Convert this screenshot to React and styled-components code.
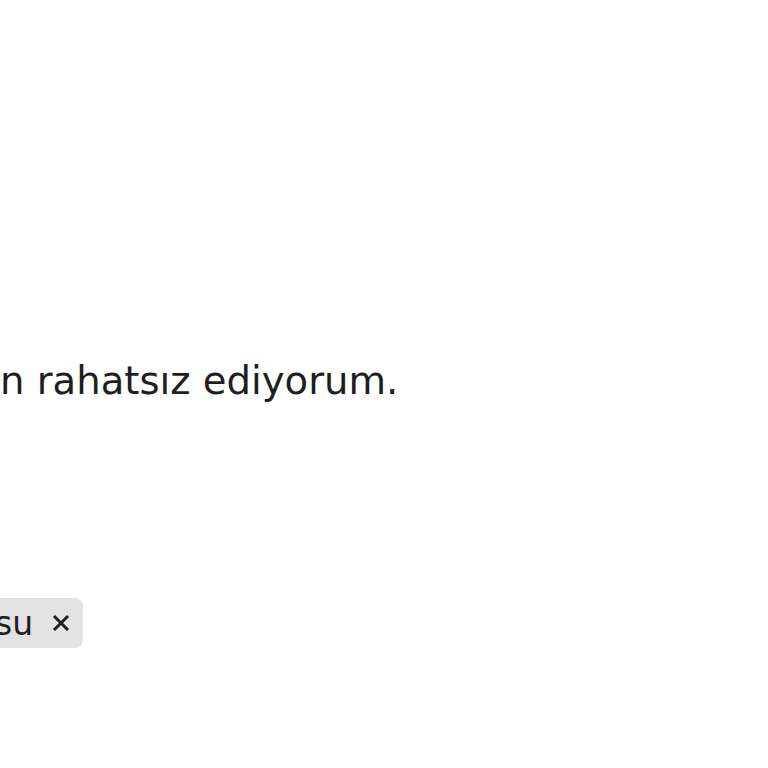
import React from "react";
import styled, { createGlobalStyle } from "styled-components";

const Global = createGlobalStyle`
  html, body { margin: 0; padding: 0; background: #ffffff; }
  body { font-family: "DejaVu Sans", Verdana, sans-serif; color: #1f1f1f; overflow: hidden; }
`;

const Page = styled.div`
  width: 768px;
  height: 768px;
  overflow: hidden;
  display: flex;
  flex-direction: column;
  align-items: flex-start;
  padding-top: 359px;
  box-sizing: border-box;
`;

const Message = styled.p`
  margin: 0;
  font-size: 38.6px;
  line-height: 44px;
  color: #1e1e1e;
  white-space: nowrap;
`;

const Tags = styled.div`
  margin-top: 195px;
  margin-left: -21px;
  display: flex;
  gap: 10px;
`;

const Chip = styled.span`
  display: inline-flex;
  align-items: center;
  gap: 19px;
  height: 50px;
  padding: 0 13px 0 16px;
  box-sizing: border-box;
  background: #e3e3e3;
  border-radius: 8px;
  font-size: 33px;
  color: #1e1e1e;
`;

const Close = styled.svg`
  width: 18px;
  height: 18px;
  display: block;
`;

export default function App() {
  return (
    <>
      <Global />
      <Page>
        <Message>n rahatsız ediyorum.</Message>
        <Tags>
          <Chip>
            su
            <Close viewBox="0 0 18 18">
              <path d="M2 2 L16 16 M16 2 L2 16" stroke="#1e1e1e" strokeWidth="3" strokeLinecap="butt" />
            </Close>
          </Chip>
        </Tags>
      </Page>
    </>
  );
}
